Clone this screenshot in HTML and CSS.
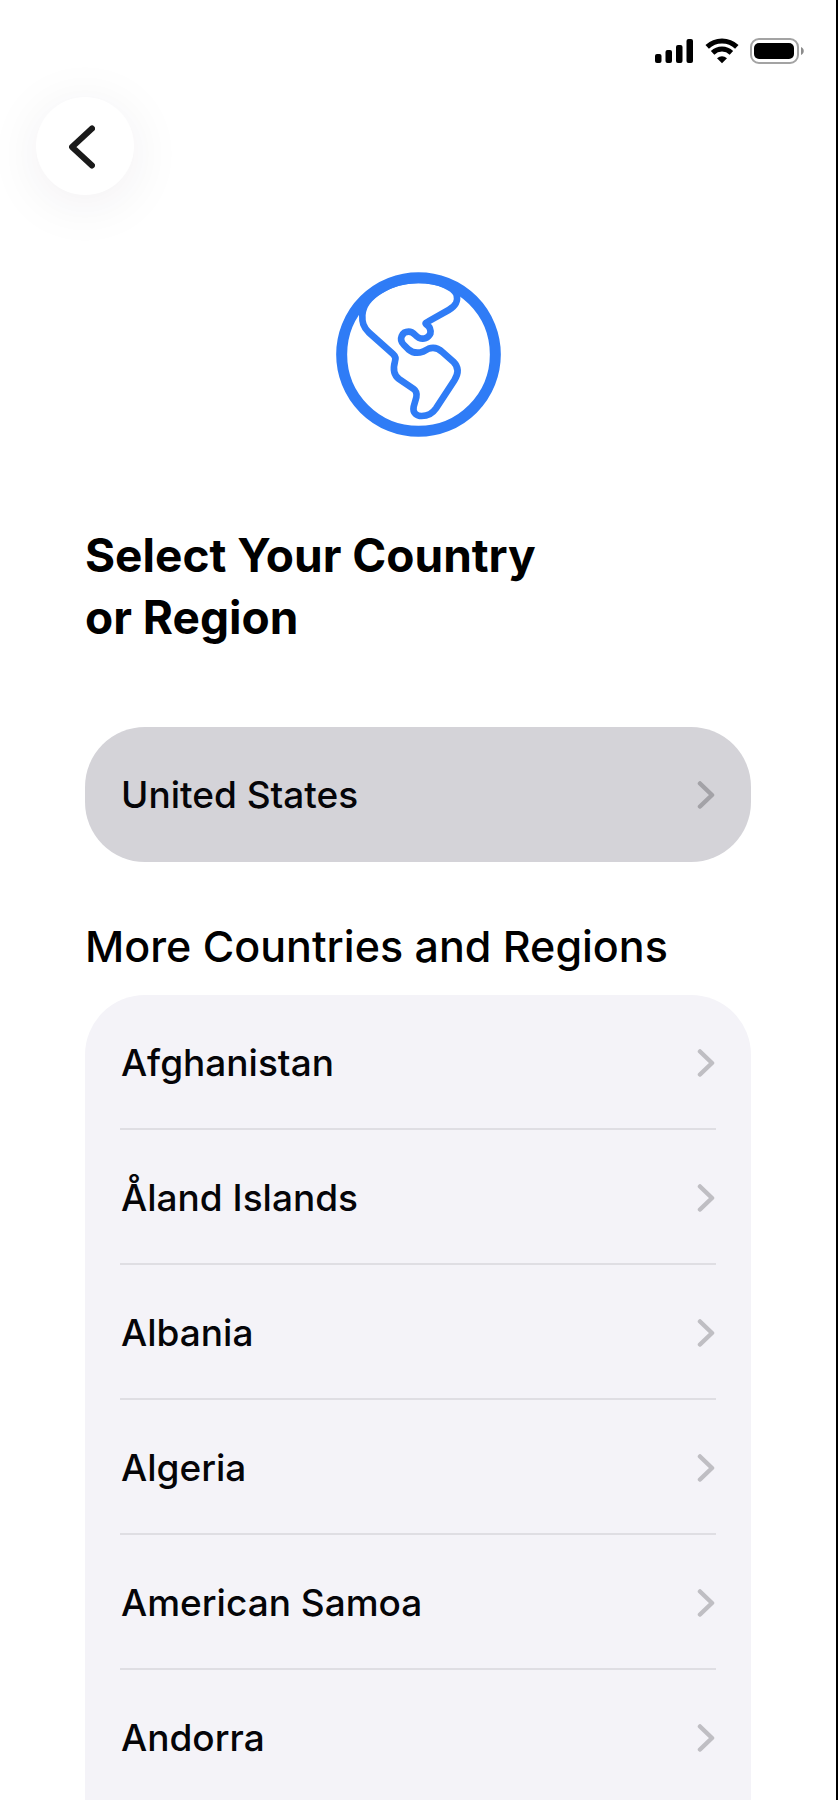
FILE: index.html
```html
<!DOCTYPE html>
<html lang="en">
<head>
  <meta charset="UTF-8">
  <meta name="viewport" content="width=device-width, initial-scale=1">
  <title>Select Your Country or Region</title>
  <link rel="stylesheet" href="styles.css">
</head>
<body>
  <svg class="defs" aria-hidden="true">
    <symbol id="chevron" viewBox="0 0 18 28">
      <path d="M3 2.500L15 14L3 25.500" fill="none" stroke="currentColor" stroke-width="4.500" stroke-linecap="round" stroke-linejoin="round"/>
    </symbol>
  </svg>

  <div class="screen">
    <header class="status-bar">
      <svg width="40" height="26" viewBox="0 0 40 26" role="img" aria-label="Signal">
        <rect x="1" y="16" width="6.500" height="9" rx="2"/>
        <rect x="11.500" y="12" width="6.500" height="13" rx="2"/>
        <rect x="22" y="7" width="6.500" height="18" rx="2"/>
        <rect x="32.500" y="1" width="6.500" height="24" rx="2"/>
      </svg>
      <svg width="34" height="26" viewBox="0 0 34 26" role="img" aria-label="Wi-Fi">
        <path d="M2.200 8.900A21.500 21.500 0 0 1 31.800 8.900M7.600 14.900A13.500 13.500 0 0 1 26.400 14.900" fill="none" stroke="#000" stroke-width="5"/>
        <path d="M12 20.200A8 8 0 0 1 22 20.200L17 25.200Z"/>
      </svg>
      <svg width="54" height="26" viewBox="0 0 54 26" role="img" aria-label="Battery full">
        <rect x="1" y="1" width="47" height="24" rx="8" fill="none" stroke="#a3a3a3" stroke-width="2"/>
        <rect x="4" y="5" width="40" height="16" rx="5"/>
        <path d="M51 9C54.700 10.500 54.700 15.500 51 17Z" fill="#8c8c8c"/>
      </svg>
    </header>

    <nav class="nav">
      <button class="back" type="button" aria-label="Back">
        <svg width="26" height="44" viewBox="0 0 26 44">
          <path d="M23 3.500L3 22L23 40.500" fill="none" stroke="currentColor" stroke-width="6" stroke-linecap="round" stroke-linejoin="round"/>
        </svg>
      </button>
    </nav>

    <main class="content">
      <svg class="globe" viewBox="33 36 495 495" aria-hidden="true">
        <circle cx="280.500" cy="283.500" r="230.500" stroke-width="33"/>
        <path d="M112 165C111 187 115 200 131 217L204 282C213 290 213 296 210 304C204 325 206 345 222 357L266 387C276 394 276 402 274 412L266 440C262 460 276 468 290 468C308 468 322 461 333 445L388 361C402 339 400 320 385 305L352 276C338 263 324 261 311 266L294 275C277 281 262 278 250 268L237 255C219 237 232 215 251 215C267 215 270 228 281 233C296 240 310 234 316 221C318 209 315 201 306 195C299 190 301 189 309 185L371 150C395 136 399 122 395 104C387 84 345 60 280 60C195 60 115 110 112 165Z" stroke-width="20"/>
      </svg>

      <h1>Select Your Country<br>or Region</h1>

      <a class="row suggested" href="#us">
        <span>United States</span>
        <svg class="chevron"><use href="#chevron"/></svg>
      </a>

      <h2>More Countries and Regions</h2>

      <ul class="countries">
        <li><a class="row" href="#af"><span>Afghanistan</span><svg class="chevron"><use href="#chevron"/></svg></a></li>
        <li><a class="row" href="#ax"><span>Åland Islands</span><svg class="chevron"><use href="#chevron"/></svg></a></li>
        <li><a class="row" href="#al"><span>Albania</span><svg class="chevron"><use href="#chevron"/></svg></a></li>
        <li><a class="row" href="#dz"><span>Algeria</span><svg class="chevron"><use href="#chevron"/></svg></a></li>
        <li><a class="row" href="#as"><span>American Samoa</span><svg class="chevron"><use href="#chevron"/></svg></a></li>
        <li><a class="row" href="#ad"><span>Andorra</span><svg class="chevron"><use href="#chevron"/></svg></a></li>
      </ul>
    </main>
  </div>
</body>
</html>
```
FILE: styles.css
```css
* {
  box-sizing: border-box;
}
body {
  margin: 0;
  background: #fff;
  color: #050508;
  font-family: Inter, "Liberation Sans", sans-serif;
}
.defs {
  display: none;
}
.screen {
  height: 100vh;
  overflow: hidden;
  border-right: 2px solid #000;
}
.status-bar {
  display: flex;
  justify-content: flex-end;
  gap: 11px;
  padding: 38px 32px 0 0;
}
.nav {
  padding: 33px 36px 0;
}
.back {
  display: flex;
  align-items: center;
  justify-content: center;
  width: 98px;
  height: 98px;
  padding: 2px 6px 0 0;
  border: none;
  border-radius: 50%;
  background: #fff;
  color: #1a1a1a;
  box-shadow: 0 8px 56px rgba(40, 10, 60, 0.07);
  cursor: pointer;
}
.content {
  padding: 77px 85px 0;
}
.globe {
  display: block;
  width: 165px;
  height: 165px;
  margin: 0 auto;
  fill: none;
  stroke: #2f7cf6;
}
h1 {
  margin: 87px 0 0;
  color: #000;
  font-size: 46px;
  font-weight: 700;
  line-height: 62px;
}
h2 {
  margin: 56px 0 20px;
  color: #000;
  font-size: 43px;
  font-weight: 500;
  line-height: 57px;
}
.row {
  display: flex;
  align-items: center;
  justify-content: space-between;
  height: 135px;
  color: inherit;
  font-size: 37px;
  font-weight: 500;
  text-decoration: none;
}
.suggested {
  margin-top: 79px;
  padding: 0 36px;
  border-radius: 60px;
  background: #d4d3d8;
}
.chevron {
  width: 18px;
  height: 28px;
  color: #bfbec3;
}
.suggested .chevron {
  color: #a3a2a7;
}
.countries {
  margin: 0;
  padding: 0 35px;
  border-radius: 60px 60px 0 0;
  background: #f4f3f8;
  list-style: none;
}
.countries .row {
  padding: 2px 1px 0;
  border-bottom: 2px solid #dfdee3;
}
```
